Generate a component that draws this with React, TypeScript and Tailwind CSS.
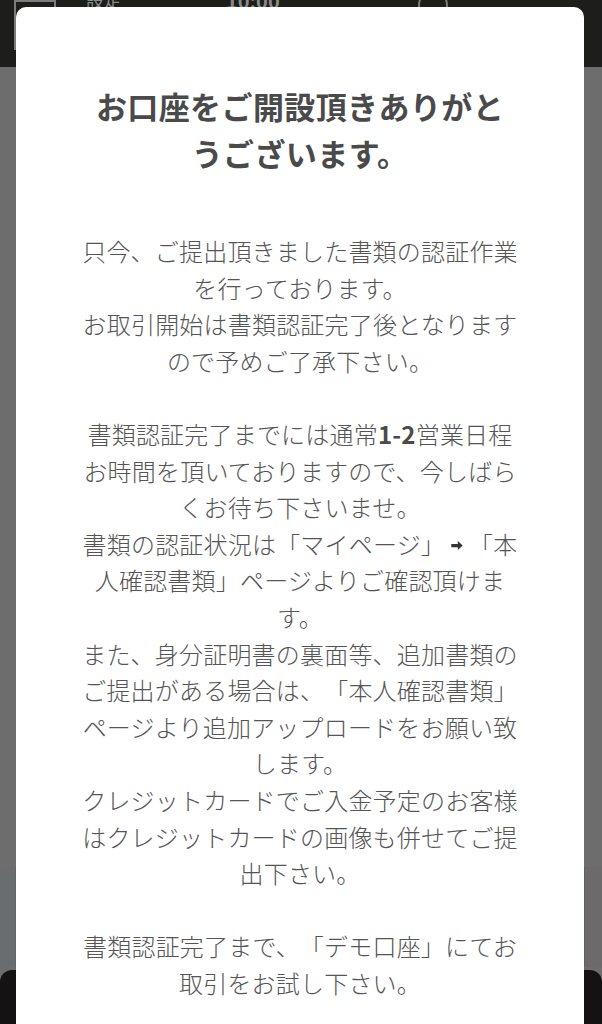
import React from "react"

const jp = "font-['Noto_Sans_CJK_JP','Noto_Sans',sans-serif]"

function Arrow() {
  return (
    <svg viewBox="0 0 16 16" className="mx-[5px] inline-block h-[13px] w-[14px] align-[2px]" fill="#333">
      <path d="M1 6h8V2.5L15 8l-6 5.5V10H1z" />
    </svg>
  )
}

export default function App() {
  return (
    <div className={`relative h-[1024px] w-full overflow-hidden bg-[#6d6d6d] ${jp}`}>
      {/* page behind the overlay */}
      <div className="flex h-[67px] items-start bg-[#1d1d1c] px-[14px]">
        <div className="h-[50px] w-[42px] border-2 border-[#7c7c7c]" />
        <span className="ml-[30px] -mt-[14px] text-[18px] text-[#8a8a8a]">設定</span>
        <span className="ml-[104px] -mt-[14px] text-[20px] font-bold text-[#8a8a8a]">10:00</span>
        <div className="ml-auto mr-[140px] -mt-[10px] h-[30px] w-[30px] rounded-full border-2 border-[#7c7c7c]" />
      </div>
      <div className="flex justify-between pt-[800px]">
        <div className="h-[100px] w-[17px] border-r-2 border-[#5b6868] bg-[#6a6d6d]" />
        <div className="h-[100px] w-[19px] border-l-2 border-[#6e5a5c] bg-[#6d6a6b]" />
      </div>
      <div className="absolute bottom-0 left-0 right-0 h-[54px] rounded-t-[12px] bg-[#151214]" />

      {/* modal */}
      <div className="absolute left-4 right-[18px] top-[7px] bottom-[-30px] rounded-[10px] bg-white px-[60px] pt-[75px]">
        <h1 className="mx-auto w-[430px] text-center text-[31px] font-bold leading-[47px] tracking-[0.4px] text-[#4a4a4a] [text-spacing-trim:space-all]">
          お口座をご開設頂きありがとうございます。
        </h1>
        <div className="mt-[57px] text-center text-[24px] font-light leading-[36.6px] tracking-[0.2px] text-[#555555] [text-spacing-trim:space-all]">
          <p>只今、ご提出頂きました書類の認証作業を行っております。</p>
          <p>お取引開始は書類認証完了後となりますので予めご了承下さい。</p>
          <p>&nbsp;</p>
          <p>
            書類認証完了までには通常<b className="font-bold text-[#4a4a4a]">1-2</b>営業日程お時間を頂いておりますので、今しばらくお待ち下さいませ。
          </p>
          <p>
            書類の認証状況は「マイページ」<Arrow />「本人確認書類」ページよりご確認頂けます。
          </p>
          <p>また、身分証明書の裏面等、追加書類のご提出がある場合は、「本人確認書類」ページより追加アップロードをお願い致します。</p>
          <p>クレジットカードでご入金予定のお客様はクレジットカードの画像も併せてご提出下さい。</p>
          <p>&nbsp;</p>
          <p>書類認証完了まで、「デモ口座」にてお取引をお試し下さい。</p>
        </div>
      </div>
    </div>
  )
}
